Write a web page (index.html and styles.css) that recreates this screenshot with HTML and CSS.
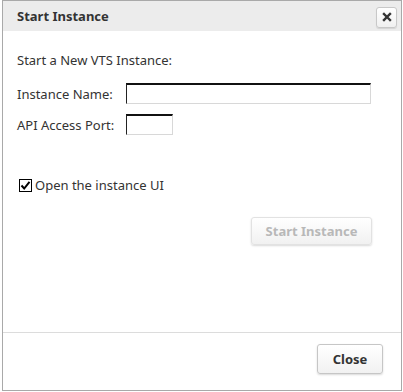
FILE: index.html
```html
<!DOCTYPE html>
<html lang="en">
<head>
    <meta charset="UTF-8">
    <title>Start Instance</title>
    <link rel="stylesheet" href="styles.css">
</head>
<body>
    <div class="dialog">
        <div class="dialog-header">
            <span class="dialog-title">Start Instance</span>
            <button class="close-x" title="Close">
                <svg width="10" height="10" viewBox="0 0 10 10">
                    <path d="M2 2 L8 8 M8 2 L2 8" stroke="#333" stroke-width="2.4" stroke-linecap="square"/>
                </svg>
            </button>
        </div>

        <div class="dialog-body">
            <p class="intro">Start a New VTS Instance:</p>
            <div class="field">
                <label for="instanceName">Instance Name:</label>
                <input type="text" id="instanceName" class="text-input name-input">
            </div>
            <div class="field">
                <label for="apiPort">API Access Port:</label>
                <input type="text" id="apiPort" class="text-input port-input">
            </div>

            <div class="check-row">
                <span class="checkbox">
                    <svg width="11" height="11" viewBox="0 0 11 11">
                        <path d="M1.5 5.5 L4.2 8.5 L9.5 1.8" fill="none" stroke="#000" stroke-width="2"/>
                    </svg>
                </span>
                <span>Open the instance UI</span>
            </div>

            <div class="actions">
                <button class="btn" disabled>Start Instance</button>
            </div>
        </div>

        <div class="dialog-footer">
            <button class="btn">Close</button>
        </div>
    </div>
</body>
</html>
```

FILE: styles.css
```css
body {
    margin: 0;
    background-color: #ffffff;
    font-family: "Noto Sans", "DejaVu Sans", sans-serif;
    font-size: 13px;
    color: #333;
}

.dialog {
    margin-left: 2px;
    width: 398px;
    height: 389px;
    border: 1px solid #a9a9a9;
    display: flex;
    flex-direction: column;
    background-color: #fff;
}

.dialog-header {
    height: 30px;
    background-color: #ececec;
    display: flex;
    align-items: center;
    justify-content: space-between;
    padding: 0 4px 0 14px;
}

.dialog-title {
    font-weight: bold;
    color: #333;
}

.close-x {
    width: 21px;
    height: 21px;
    padding: 0;
    border: 1px solid #c8c8c8;
    border-radius: 3px;
    background: linear-gradient(#ffffff, #f0f0f0);
    box-shadow: 0 1px 1px rgba(0, 0, 0, 0.1);
    display: flex;
    align-items: center;
    justify-content: center;
    margin-top: 2px;
}

.dialog-body {
    flex: 1;
    padding: 21px 14px 0 14px;
}

.intro {
    margin: 0 0 14px 0;
    line-height: 17px;
}

.field {
    display: flex;
    align-items: center;
    margin-bottom: 10px;
}

.field label {
    width: 109px;
}

.text-input {
    height: 21px;
    box-sizing: border-box;
    border-top: 2px solid #111;
    border-left: 1px solid #222;
    border-right: 1px solid #d8d8d8;
    border-bottom: 1px solid #d8d8d8;
    padding: 0 3px;
    font: inherit;
}

.name-input {
    width: 245px;
}

.port-input {
    width: 47px;
}

.check-row {
    display: flex;
    align-items: center;
    margin: 41px 0 0 2px;
    gap: 3px;
}

.checkbox {
    width: 11px;
    height: 11px;
    border: 1px solid #000;
    display: flex;
    align-items: center;
    justify-content: center;
}

.actions {
    display: flex;
    justify-content: flex-end;
    padding-right: 15px;
    margin-top: 23px;
}

.btn {
    font: inherit;
    font-weight: bold;
    color: #333;
    padding: 0 10px;
    height: 28px;
    border: 1px solid #c6c6c6;
    border-radius: 3px;
    background: linear-gradient(#ffffff, #f1f1f1);
    box-shadow: 0 1px 2px rgba(0, 0, 0, 0.15);
}

.btn:disabled {
    color: #b8b8b8;
    border-color: #e2e2e2;
    width: 121px;
}

.dialog-footer {
    height: 58px;
    border-top: 1px solid #dcdcdc;
    display: flex;
    justify-content: flex-end;
    align-items: flex-start;
    padding: 11px 18px 0 0;
    box-sizing: border-box;
}

.dialog-footer .btn {
    width: 66px;
    height: 30px;
}
```
